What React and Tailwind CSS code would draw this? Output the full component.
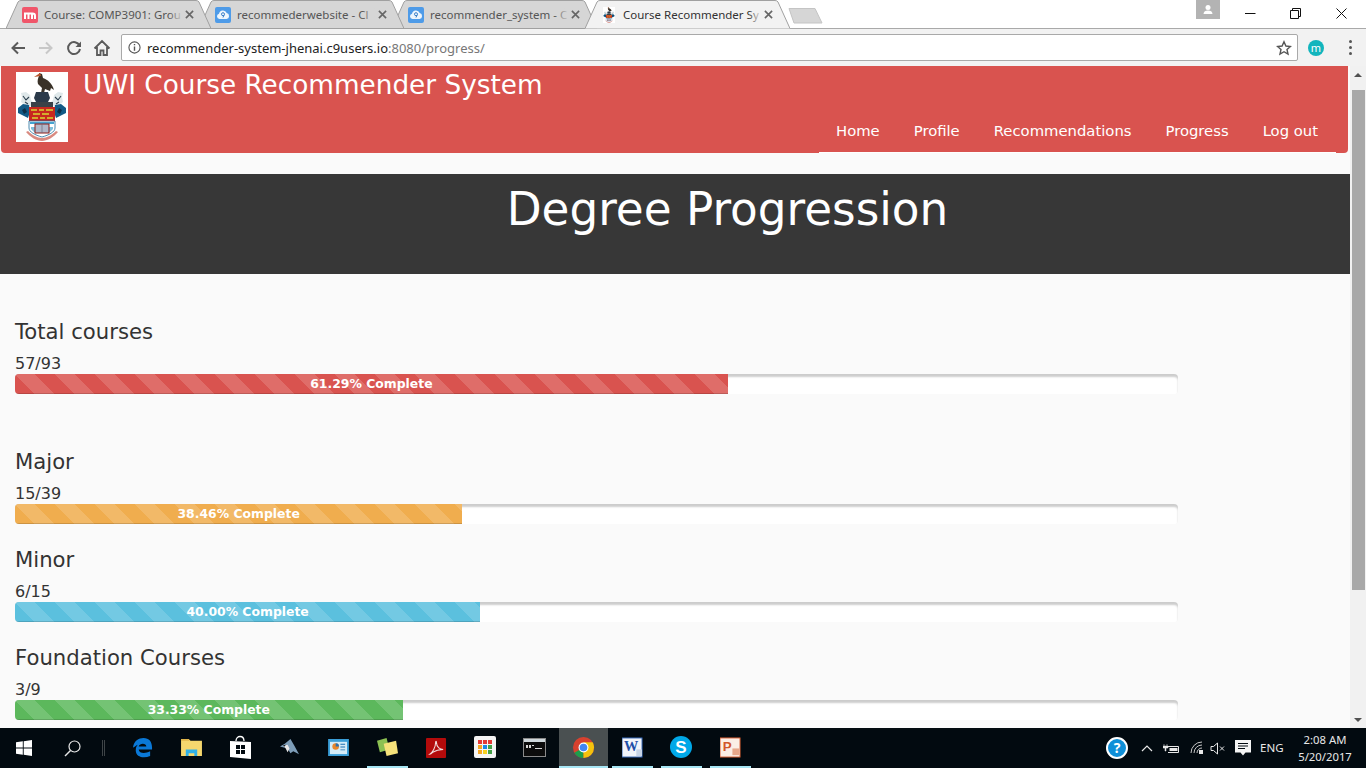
import React from "react";

const sans = "font-['Noto_Sans','Open_Sans',sans-serif]";

function Crest({ className }) {
  return (
    <svg viewBox="0 0 52 70" className={className}>
      <rect width="52" height="70" fill="#fff" />
      <path d="M23 1l3 1 1 4c5 2 9 5 11 12l-3-2-1 3-5-2-1 4h-3l1-5-4-4c-1-3 0-6 1-8z" fill="#3a3228" />
      <path d="M18 5l6-4 1 3z" fill="#b5562e" />
      <path d="M20 20h12l2 6-2 4H20l-2-4z" fill="#2b3a4a" />
      <path d="M5 21l5-1 4 3 1 5 3 3-4 3-5-1-4-3 1-5z" fill="#dfe8ea" />
      <path d="M47 21l-5-1-4 3-1 5-3 3 4 3 5-1 4-3-1-5z" fill="#dfe8ea" />
      <path d="M7 24l3 4 3-3M9 30l3 2M45 24l-3 4-3-3M43 30l-3 2" fill="none" stroke="#2f4250" strokeWidth="1.100" />
      <path d="M2 36l5-4 6 1 1 7-2 6-6-3-4-2z" fill="#135a86" />
      <path d="M50 36l-5-4-6 1-1 7 2 6 6-3 4-2z" fill="#135a86" />
      <path d="M6 38l3-2 2 4-3 2zM46 38l-3-2-2 4 3 2z" fill="#0d2f48" />
      <path d="M15 30h22v6H15z" fill="#3a4148" />
      <rect x="13" y="35" width="26" height="14" fill="#c8281f" />
      <path d="M15 37h6v2h-6zm8 0h5v2h-5zm7 0h7v2h-7zm-13 4h7v2h-7zm9 0h7v2h-7zm-10 4h6v2h-6zm8 0h5v2h-5zm7 0h6v2h-6z" fill="#d4ac2d" />
      <path d="M13 49h26v7c0 4-6 7-13 9-7-2-13-5-13-9z" fill="#fff" stroke="#1e6d9c" strokeWidth=".8" />
      <path d="M14 50h24v2H14z" fill="#46a4d2" />
      <path d="M15 55h22v2l-3 3H18l-3-3z" fill="#7fbfdc" />
      <rect x="19" y="52" width="14" height="9" fill="#b1b7c8" stroke="#8c1f1a" strokeWidth="1" />
      <path d="M26 52v9" stroke="#6a6f80" strokeWidth=".7" />
      <path d="M10 60c4 5 11 9 16 9s12-4 16-9l-2-1c-4 4-9 7-14 7s-10-3-14-7z" fill="#d98a80" />
    </svg>
  );
}

function Tab({ active, title, fav, z }) {
  return (
    <div className={`relative flex h-[29px] w-[205px] shrink-0 items-center -mr-[12px] ${z}`}>
      <svg className="absolute inset-0 h-full w-full" viewBox="0 0 205 29">
        <path
          d={active ? "M0 28.5 L12 2 Q13 .5 15 .5 L190 .5 Q192 .5 193 2 L205 28.5" : "M0 28.5 L12 2 Q13 .5 15 .5 L190 .5 Q192 .5 193 2 L205 28.5 Z"}
          fill={active ? "#f2f2f2" : "#d6d6d6"}
          stroke="#a0a0a0"
          strokeWidth="1"
        />
      </svg>
      <div className="relative ml-[16px] flex h-4 w-4 shrink-0 items-center justify-center">{fav}</div>
      <div className="relative ml-[6px] flex-1 overflow-hidden">
        <div className={`${sans} whitespace-nowrap text-[11.500px] leading-4 ${active ? "text-[#333]" : "text-[#555]"}`}>{title}</div>
        <div className={`absolute inset-y-0 right-0 w-[14px] bg-gradient-to-r from-transparent ${active ? "to-[#f2f2f2]" : "to-[#d6d6d6]"}`} />
      </div>
      <svg viewBox="0 0 10 10" className="relative ml-[2px] mr-[17.500px] h-[9px] w-[9px] shrink-0">
        <path d="M1 1l8 8M9 1l-8 8" stroke="#666" strokeWidth="1.800" />
      </svg>
    </div>
  );
}

function MoodleFav() {
  return (
    <svg viewBox="0 0 16 16" className="h-4 w-4">
      <rect width="16" height="16" rx="2" fill="#f0566a" />
      <path d="M3 12V6.500h7.500c1.500 0 2.500.8 2.500 2.200V12M6.500 12V7M10 12V7" fill="none" stroke="#fff" strokeWidth="2" />
    </svg>
  );
}
function CloudFav() {
  return (
    <svg viewBox="0 0 16 16" className="h-4 w-4">
      <rect width="16" height="16" rx="2" fill="#4e9be8" />
      <path d="M4.500 12a2.700 2.700 0 0 1-.5-5.300 4 4 0 0 1 7.700-.6A3 3 0 0 1 11.500 12z" fill="#eef6fd" />
      <circle cx="8" cy="7.200" r="1.500" fill="none" stroke="#3a7fc8" strokeWidth="1" />
      <path d="M9 8l-1 2.500" stroke="#3a7fc8" strokeWidth="1" />
    </svg>
  );
}

function Chrome() {
  return (
    <div className="shrink-0 bg-white">
      <div className="flex h-[29px] items-end justify-between border-b border-[#a9a9a9]">
        <div className="-mb-px flex items-end pl-[6px]">
          <Tab z="z-30" title="Course: COMP3901: Grou" fav={<MoodleFav />} />
          <Tab z="z-20" title="recommederwebsite - Cl" fav={<CloudFav />} />
          <Tab z="z-10" title="recommender_system - C" fav={<CloudFav />} />
          <Tab z="z-40" active title="Course Recommender Sy" fav={<Crest className="h-4 w-4" />} />
          <svg viewBox="0 0 36 18" className="mb-[4px] ml-[10px] h-[18px] w-[36px]">
            <path d="M1 1.500h26l7 14.500H6z" fill="#d6d6d6" stroke="#c4c4c4" strokeWidth="1" strokeLinejoin="round" />
          </svg>
        </div>
        <div className="flex h-full items-start pr-[2px]">
          <div className="flex h-[19px] w-[24px] items-center justify-center bg-[#b3b3b3]">
            <svg viewBox="0 0 12 12" className="h-3 w-3">
              <circle cx="6" cy="3.500" r="2.500" fill="#fff" />
              <path d="M1.500 10c0-2.500 2-3.500 4.500-3.500s4.500 1 4.500 3.500z" fill="#fff" />
            </svg>
          </div>
          <div className="ml-[7.500px] flex">
            <div className="flex h-[27px] w-[45.500px] items-center justify-center">
              <svg viewBox="0 0 11 11" className="h-[11px] w-[11px]"><path d="M0 5.500h10.500" stroke="#111" strokeWidth="1" /></svg>
            </div>
            <div className="flex h-[27px] w-[45.500px] items-center justify-center">
              <svg viewBox="0 0 11 11" className="h-[11px] w-[11px]"><path d="M.5 2.500h8v8h-8zM2.500 2.500v-2h8v8h-2" fill="none" stroke="#111" strokeWidth="1" /></svg>
            </div>
            <div className="flex h-[27px] w-[45.500px] items-center justify-center">
              <svg viewBox="0 0 11 11" className="h-[11px] w-[11px]"><path d="M.5.500l10 10M10.500.500l-10 10" stroke="#111" strokeWidth="1" /></svg>
            </div>
          </div>
        </div>
      </div>
      <div className="flex h-[37px] items-center bg-[#f2f2f2]">
        <div className="flex w-[121px] items-center">
          <svg viewBox="0 0 16 16" className="ml-[10px] h-4 w-4"><path d="M15 8H2.500M8 2.500L2.500 8 8 13.500" fill="none" stroke="#5a5a5a" strokeWidth="2" /></svg>
          <svg viewBox="0 0 16 16" className="ml-[12px] h-4 w-4"><path d="M1 8h12.500M8 2.500L13.500 8 8 13.500" fill="none" stroke="#c8c8c8" strokeWidth="2" /></svg>
          <svg viewBox="0 0 16 16" className="ml-[12px] h-4 w-4"><path d="M13.500 5.500A6 6 0 1 0 14 9" fill="none" stroke="#5a5a5a" strokeWidth="2" /><path d="M15 1.500V7H9.500z" fill="#5a5a5a" /></svg>
          <svg viewBox="0 0 18 18" className="ml-[11px] h-[18px] w-[18px]"><path d="M1.500 9.500L9 2l7.500 7.500M4 8v8h3.500v-4.500h3V16H14V8" fill="none" stroke="#5a5a5a" strokeWidth="1.800" /></svg>
        </div>
        <div className="flex h-[27px] w-[1177px] items-center rounded-[2px] border border-[#a9a9a9] bg-white">
          <svg viewBox="0 0 14 14" className="ml-[6px] h-[13px] w-[13px]">
            <circle cx="7" cy="7" r="6" fill="none" stroke="#555" strokeWidth="1.200" />
            <path d="M7 6v4.500M7 3.200v1.500" stroke="#555" strokeWidth="1.500" />
          </svg>
          <div className={`${sans} ml-[6px] flex-1 text-[13px] leading-5 text-[#222]`}>
            recommender-system-jhenai.c9users.io<span className="text-[#777]">:8080/progress/</span>
          </div>
          <svg viewBox="0 0 16 16" className="mr-[5px] h-4 w-4">
            <path d="M8 1.800l1.900 4.200 4.500.5-3.400 3 1 4.500L8 11.700 4 14l1-4.500-3.400-3 4.500-.5z" fill="none" stroke="#555" strokeWidth="1.400" />
          </svg>
        </div>
        <div className={`${sans} ml-[10px] flex h-4 w-4 items-center justify-center rounded-full bg-[#12b5bd] text-[11px] leading-none text-white`}>m</div>
        <div className="ml-[25px] flex flex-col gap-[3px]">
          <div className="h-[3px] w-[3px] rounded-full bg-[#555]" />
          <div className="h-[3px] w-[3px] rounded-full bg-[#555]" />
          <div className="h-[3px] w-[3px] rounded-full bg-[#555]" />
        </div>
      </div>
    </div>
  );
}

function Progress({ label, frac, pct, bar, tall }) {
  return (
    <section className={tall ? "mb-[54px]" : "mb-[22px]"}>
      <h3 className="text-[21.200px] font-normal leading-[27px] text-[#333]">{label}</h3>
      <p className="mt-[9px] text-[16px] leading-[20px] text-[#333]">{frac}</p>
      <div className="h-[20px] w-[1163px] overflow-hidden rounded-[4px] bg-white shadow-[inset_0_3px_2px_rgba(0,0,0,0.2)]">
        <div
          className={`flex h-full items-center justify-center bg-[length:40px_40px] bg-[linear-gradient(45deg,rgba(255,255,255,0.15)_25%,transparent_25%,transparent_50%,rgba(255,255,255,0.15)_50%,rgba(255,255,255,0.15)_75%,transparent_75%,transparent)] text-[12.400px] font-bold leading-none text-white shadow-[inset_0_-1px_0_rgba(0,0,0,0.15)] ${bar}`}
          style={{ width: `${pct}%` }}
        >
          {pct.toFixed(2)}% Complete
        </div>
      </div>
    </section>
  );
}

function Page() {
  const nav = ["Home", "Profile", "Recommendations", "Progress", "Log out"];
  return (
    <div className="relative h-[662px] flex-1 overflow-hidden bg-[#fafafa] font-['DejaVu_Sans',sans-serif]">
      <header className="ml-[1px] mr-[2px] flex h-[87px] rounded-b-[4px] bg-[#d9534f] pl-[15px] pr-[12px]">
        <Crest className="mt-[6px] h-[70px] w-[52px] shrink-0" />
        <div className="ml-[15px] flex-1">
          <div className="mt-[1px] text-[26.300px] leading-[36px] text-white">UWI Course Recommender System</div>
          <nav className="mt-[11px] flex justify-end">
            <ul className="flex h-[39px] items-center border-b border-white">
              {nav.map((n) => (
                <li key={n} className="px-[17px] pb-[5px] text-[14.800px] leading-5 text-white last:pr-[18px]">{n}</li>
              ))}
            </ul>
          </nav>
        </div>
      </header>
      <div className="mt-[21px] flex h-[100px] justify-center bg-[#373737] pl-[105px]">
        <h1 className="mt-[12px] text-[45.300px] font-normal leading-[48px] text-white">Degree Progression</h1>
      </div>
      <main className="px-[15px] pt-[44px]">
        <Progress label="Total courses" frac="57/93" pct={61.29} bar="bg-[#d9534f]" tall />
        <Progress label="Major" frac="15/39" pct={38.46} bar="bg-[#f0ad4e]" />
        <Progress label="Minor" frac="6/15" pct={40} bar="bg-[#5bc0de]" />
        <Progress label="Foundation Courses" frac="3/9" pct={33.33} bar="bg-[#5cb85c]" />
      </main>
    </div>
  );
}

function Scrollbar() {
  return (
    <div className="flex h-[662px] w-[16px] shrink-0 flex-col items-center bg-[#f1f1f1]">
      <div className="flex h-[24px] items-center justify-center pb-[6px]">
        <div className="h-0 w-0 border-x-[4px] border-b-[4px] border-x-transparent border-b-[#505050]" />
      </div>
      <div className="h-[500px] w-[13px] bg-[#a8a8a8]" />
      <div className="flex-1" />
      <div className="flex h-[16px] items-center justify-center">
        <div className="h-0 w-0 border-x-[4px] border-t-[4px] border-x-transparent border-t-[#505050]" />
      </div>
    </div>
  );
}

function TaskIcon({ children, on, active }) {
  return (
    <div className={`flex h-full w-[49px] shrink-0 flex-col items-center ${active ? "bg-[#4a5051]" : ""}`}>
      <div className="flex flex-1 items-center justify-center">{children}</div>
      <div className={`h-[2px] ${active ? "w-full bg-[#a7e6f4]" : on ? "w-[41px] bg-[#a7e6f4]" : "w-[41px]"}`} />
    </div>
  );
}

function Taskbar() {
  return (
    <div className="flex h-[40px] shrink-0 items-stretch bg-[#020a10]">
      <div className="flex w-[48px] items-center justify-center">
        <svg viewBox="0 0 16 16" className="h-4 w-4"><path d="M0 2.300L6.800 1.300v6.200H0zM7.700 1.200L16 0v7.500H7.700zM0 8.500h6.800v6.200L0 13.700zM7.700 8.500H16V16l-8.300-1.200z" fill="#fff" /></svg>
      </div>
      <div className="flex w-[48px] items-center justify-center">
        <svg viewBox="0 0 17 17" className="h-[17px] w-[17px]"><circle cx="10.500" cy="6.500" r="5.500" fill="none" stroke="#e8e8e8" strokeWidth="1.200" /><path d="M6.500 10.500L1 16" stroke="#e8e8e8" strokeWidth="1.400" /></svg>
      </div>
      <div className="flex w-[21.500px] items-center">
        <div className="ml-[6px] h-[16px] w-[3px] border-x border-[#3e4447]" />
      </div>
      <TaskIcon>
        <svg viewBox="0 0 22 22" className="h-[21px] w-[21px]"><path d="M1 11C2 4 7 1 12 1c6 0 9 4 9 10v2H7c.500 4 6 5 12 2v5c-7 3-16 1-15-7 0-2 1-4 2-5-2 1-4 3-5 3zm6-1h8c0-4-7-4-8 0z" fill="#0a78d7" /></svg>
      </TaskIcon>
      <TaskIcon>
        <svg viewBox="0 0 22 20" className="h-[19px] w-[21px]"><path d="M0 1h8l2 2h12v16H0z" fill="#f5d76e" /><path d="M0 1h8l1 2H0z" fill="#e0b54a" /><path d="M5 19v-7h12v7h-3v-3H8v3z" fill="#2fb0e8" /></svg>
      </TaskIcon>
      <TaskIcon>
        <svg viewBox="0 0 21 24" className="h-[24px] w-[21px]"><path d="M6 6c0-6 8-6 8 0" fill="none" stroke="#fff" strokeWidth="1.300" /><path d="M0 6l21 1v17L0 22z" fill="#fff" /><path d="M6 10h4v4H6zm5 0h4v4h-4zm-5 5h4v4H6zm5 0h4v4h-4z" fill="#020a10" /></svg>
      </TaskIcon>
      <TaskIcon>
        <svg viewBox="0 0 22 20" className="h-[19px] w-[21px]"><path d="M1 9l5-3 6-5 4 7 5 9-6-3-3 2-3-5-4-1z" fill="#7d9db8" /><path d="M5 8l4-1 2 4-2 4-2-4z" fill="#e8e8e8" /><path d="M4 8l3-1-1 2z" fill="#111" /></svg>
      </TaskIcon>
      <TaskIcon>
        <svg viewBox="0 0 22 18" className="h-[17px] w-[21px]"><rect width="22" height="18" fill="#3a9ed8" /><rect x="2" y="3" width="18" height="13" fill="#d5ecf8" /><circle cx="8" cy="8" r="3.500" fill="#e8862c" /><path d="M8 8V4.500A3.500 3.500 0 0 1 11.500 8z" fill="#2a6fb0" /><path d="M13 5h5v1h-5zm0 3h5v1h-5zm0 3h5v1h-5z" fill="#1f6fb0" /></svg>
      </TaskIcon>
      <TaskIcon on>
        <svg viewBox="0 0 24 22" className="h-[21px] w-[23px]"><path d="M1 4l10-3 3 12-10 3z" fill="#8cc152" /><path d="M8 7l13-3 2 13-12 3z" fill="#f6e27a" /></svg>
      </TaskIcon>
      <TaskIcon>
        <svg viewBox="0 0 22 22" className="h-[21px] w-[21px]"><rect width="21" height="21" y="1" rx="1" fill="#b30b0b" /><path d="M4 18c3-2 6-7 6-12 0-2 1-2 1 0 0 5 4 7 7 7-3 0-8 1-11 3-2 2-3 2-3 2z" fill="none" stroke="#f2dcdc" strokeWidth="1.100" /></svg>
      </TaskIcon>
      <TaskIcon>
        <div className="grid h-[22px] w-[22px] grid-cols-3 gap-[1.500px] rounded-[2px] bg-[#f4f4f4] p-[4px]">
          <div className="bg-[#e53935]" /><div className="bg-[#e53935]" /><div className="bg-[#e53935]" />
          <div className="bg-[#f5a623]" /><div className="bg-[#1e88e5]" /><div className="bg-[#43a047]" />
          <div className="bg-[#f5a623]" /><div className="bg-[#f5d020]" /><div className="bg-[#43a047]" />
        </div>
      </TaskIcon>
      <TaskIcon>
        <svg viewBox="0 0 23 19" className="h-[19px] w-[23px]"><rect x=".5" y=".5" width="22" height="18" fill="#0c0c0c" stroke="#8a8a8a" /><rect x="1" y="1" width="21" height="3" fill="#cfd8dc" /><path d="M3 7h2v3H3zm3 0h2v3H6zm3 0h2v1H9zm3 3h7v1h-7z" fill="#d8d8d8" /></svg>
      </TaskIcon>
      <TaskIcon on active>
        <svg viewBox="0 0 24 24" className="h-[23px] w-[23px]">
          <circle cx="12" cy="12" r="11" fill="#d8412f" />
          <path d="M12 12L2.500 17.500A11 11 0 0 0 12 23z" fill="#1c9e4c" />
          <path d="M12 12v11A11 11 0 0 0 23 12c0-2-.500-3.500-1.500-5.500H12z" fill="#f4c20d" />
          <circle cx="12" cy="12" r="5.200" fill="#fff" />
          <circle cx="12" cy="12" r="4" fill="#4285f4" />
        </svg>
      </TaskIcon>
      <TaskIcon on>
        <svg viewBox="0 0 22 22" className="h-[21px] w-[21px]"><rect y="1" width="21" height="20" fill="#f2f5fa" stroke="#2b5eb0" /><text x="2" y="15" fontFamily="Liberation Serif, serif" fontWeight="700" fontSize="15" fill="#1f4fa8">W</text><rect x="15" y="13" width="6" height="7" fill="#c7d4e6" /></svg>
      </TaskIcon>
      <TaskIcon on>
        <div className="flex h-[22px] w-[22px] items-center justify-center rounded-full bg-[#00a8e8] font-['Liberation_Sans',sans-serif] text-[17px] font-bold leading-none text-white">S</div>
      </TaskIcon>
      <TaskIcon on>
        <svg viewBox="0 0 22 22" className="h-[21px] w-[21px]"><rect y="1" width="21" height="20" fill="#fbeee6" stroke="#d2572a" /><text x="3" y="15" fontFamily="Liberation Sans, sans-serif" fontWeight="700" fontSize="14" fill="#d2572a">P</text><rect x="13" y="12" width="7" height="7" fill="#e7a78a" /></svg>
      </TaskIcon>
      <div className="flex-1" />
      <div className="flex items-center pr-[14px] font-['Noto_Sans',sans-serif] text-[#e8e8e8]">
        <div className="flex h-[22px] w-[22px] items-center justify-center rounded-full border-2 border-white bg-[#0f8fd8] text-[14px] font-bold leading-none text-white">?</div>
        <svg viewBox="0 0 12 7" className="ml-[13px] h-[7px] w-[12px]"><path d="M1 6l5-5 5 5" fill="none" stroke="#e8e8e8" strokeWidth="1.200" /></svg>
        <svg viewBox="0 0 17 11" className="ml-[9.500px] h-[11px] w-[17px]"><path d="M5 3.500h10.500v6H5" fill="none" stroke="#e8e8e8" /><rect x="6.500" y="5" width="8" height="3" fill="#e8e8e8" /><path d="M1 1v2M4 1v2M0 3h5v2H3v3H2V5H0z" fill="#e8e8e8" stroke="#e8e8e8" strokeWidth=".5" /></svg>
        <svg viewBox="0 0 14 14" className="ml-[10.500px] h-[14px] w-[14px]"><path d="M1 12A11 11 0 0 1 12 1M4 12a8 8 0 0 1 8-8M7 12a5 5 0 0 1 5-5" fill="none" stroke="#c8c8c8" /><rect x="9" y="9" width="4" height="4" fill="#e8e8e8" /></svg>
        <svg viewBox="0 0 15 13" className="ml-[5.500px] h-[13px] w-[15px]"><path d="M1 4.500h2.500L7.500 1v11L3.500 8.500H1z" fill="none" stroke="#e8e8e8" /><path d="M10 4.500l4 4M14 4.500l-4 4" stroke="#e8e8e8" /></svg>
        <svg viewBox="0 0 16 17" className="ml-[10.500px] h-[17px] w-[16px]"><path d="M0 0h16v12.500h-5.500L8 15.500l-2.500-3H0z" fill="#f4f4f4" /><path d="M3 3.500h10M3 6h10M3 8.500h7" stroke="#020a10" /></svg>
        <div className="ml-[9px] w-[24px] text-[11.500px] leading-none">ENG</div>
        <div className="ml-[14px] flex w-[54px] flex-col items-center whitespace-nowrap text-[11.300px] leading-[17px]">
          <div>2:08 AM</div>
          <div>5/20/2017</div>
        </div>
      </div>
    </div>
  );
}

export default function App() {
  return (
    <div className="flex h-screen w-[1366px] flex-col overflow-hidden">
      <Chrome />
      <div className="flex h-[662px] overflow-hidden">
        <Page />
        <Scrollbar />
      </div>
      <Taskbar />
    </div>
  );
}
